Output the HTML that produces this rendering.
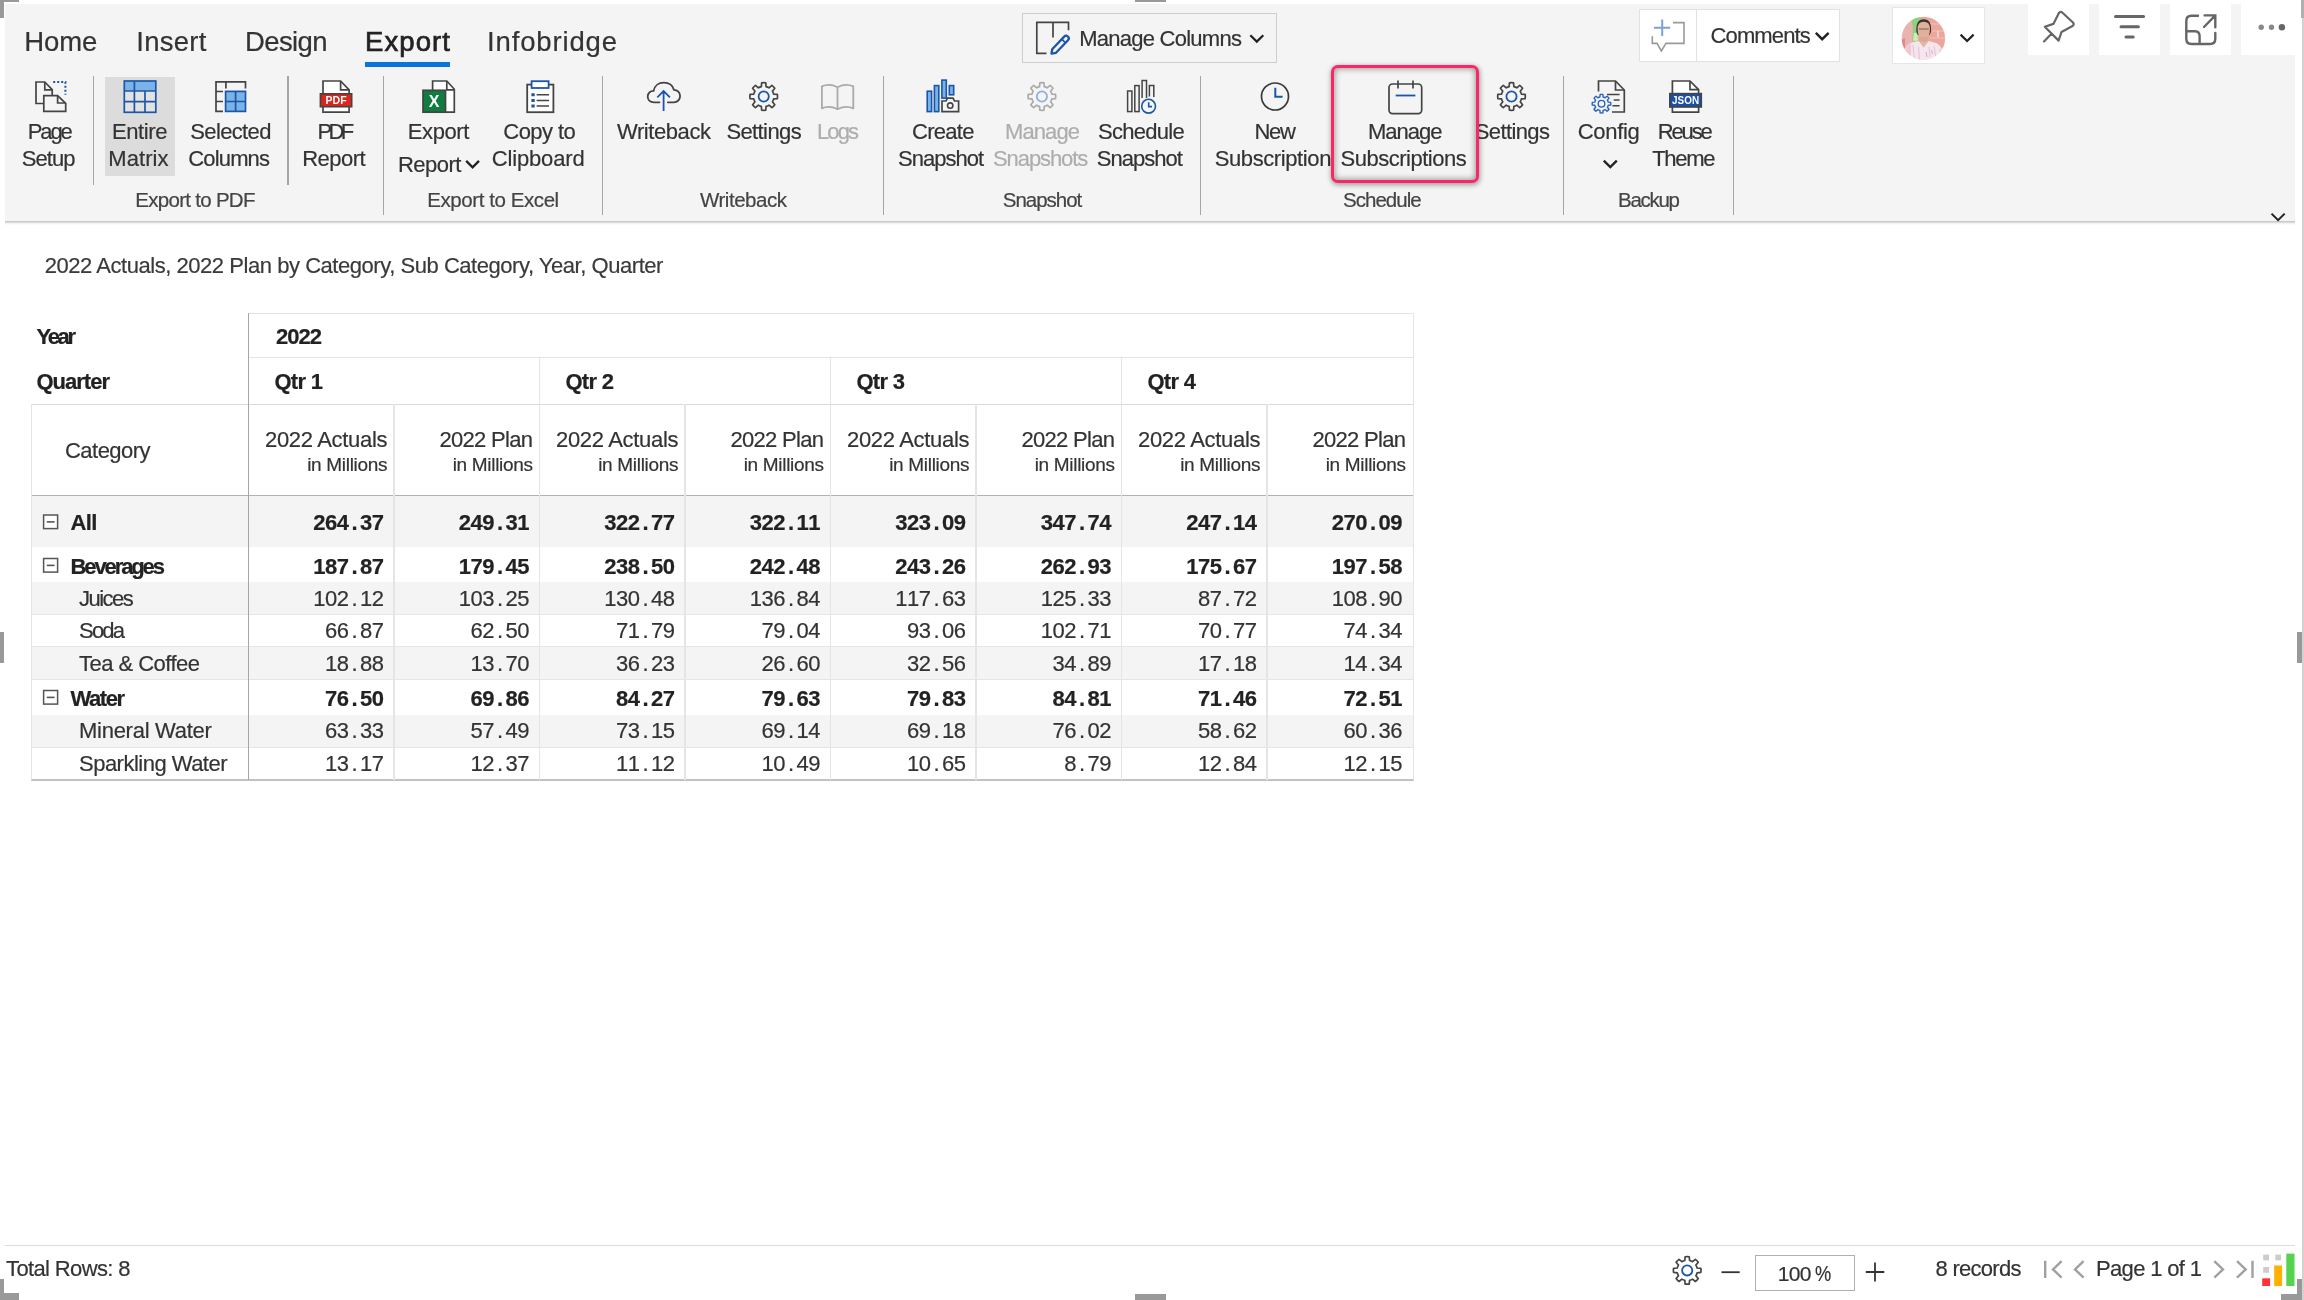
<!DOCTYPE html><html lang="en"><head><meta charset="utf-8"><title>Matrix report</title><style>
html,body{margin:0;padding:0;background:#fff}
body{width:2304px;height:1300px;position:relative;overflow:hidden;font-family:"Liberation Sans",sans-serif}
div,svg{position:absolute}
svg{z-index:5}
.t{position:absolute;white-space:nowrap;line-height:1;font-family:"Liberation Sans", sans-serif;color:#333;z-index:2;-webkit-text-stroke:0.2px}
.ns text{font-family:"Liberation Sans",sans-serif;font-size:22px;fill:#333;stroke:#333;stroke-width:0.2px}
.ns text.b{font-weight:700;fill:#222;stroke:#222}
.h{background:#999}
.sep{background:#a6a6a6;width:1.5px}
.wb{background:#fff}
</style></head><body><div id="page" style="left:0;top:0;width:2304px;height:1300px;will-change:transform">
<div style="left:2302px;top:0;width:2px;height:1300px;background:#d2d2d2"></div>
<div style="left:5px;top:4px;width:2290px;height:216.5px;background:#f4f4f4"></div>
<div style="left:5px;top:220.5px;width:2290px;height:4px;background:linear-gradient(rgba(0,0,0,.26),rgba(0,0,0,.06) 60%,rgba(0,0,0,0))"></div>
<div style="left:105.2px;top:76.6px;width:69.4px;height:99.4px;background:#dcdcdc"></div>
<div class="sep" style="left:92.6px;top:76.4px;height:109px"></div>
<div class="sep" style="left:287.3px;top:76.4px;height:109px"></div>
<div class="sep" style="left:382.6px;top:76.4px;height:138.6px"></div>
<div class="sep" style="left:601.6999999999999px;top:76.4px;height:138.6px"></div>
<div class="sep" style="left:882.9px;top:76.4px;height:138.6px"></div>
<div class="sep" style="left:1199.6px;top:76.4px;height:138.6px"></div>
<div class="sep" style="left:1562.6px;top:76.4px;height:138.6px"></div>
<div class="sep" style="left:1732.6px;top:76.4px;height:138.6px"></div>
<div style="left:364.8px;top:61.6px;width:85.4px;height:5.6px;background:#0a74d8"></div>
<div style="left:1022.4px;top:12.8px;width:255px;height:50.5px;box-sizing:border-box;border:1.5px solid #cdcdcd"></div>
<div class="wb" style="left:1639.3px;top:9.2px;width:201.2px;height:52.8px;box-sizing:border-box;border:1.5px solid #e2e2e2"></div>
<div style="left:1695.5px;top:10px;width:1.5px;height:51px;background:#e2e2e2"></div>
<div class="wb" style="left:1891.5px;top:6.6px;width:93.2px;height:57.8px;box-sizing:border-box;border:1.5px solid #e6e6e6"></div>
<div class="wb" style="left:2028px;top:4px;width:61.2px;height:51.2px"></div>
<div class="wb" style="left:2099px;top:4px;width:61.0px;height:51.2px"></div>
<div class="wb" style="left:2169.5px;top:4px;width:61.5px;height:51.2px"></div>
<div class="wb" style="left:2241px;top:4px;width:54.0px;height:51.2px"></div>
<span class="t" style="left:24.20px;top:28.00px;font-size:27.5px;letter-spacing:-0.086px;">Home</span>
<span class="t" style="left:136.30px;top:28.00px;font-size:27.5px;letter-spacing:0.244px;">Insert</span>
<span class="t" style="left:245.00px;top:28.00px;font-size:27.5px;letter-spacing:-0.622px;">Design</span>
<span class="t" style="left:365.00px;top:28.00px;font-size:27.5px;color:#222;letter-spacing:1.103px;-webkit-text-stroke:0.7px #222;">Export</span>
<span class="t" style="left:487.00px;top:28.00px;font-size:27.5px;letter-spacing:0.852px;">Infobridge</span>
<span class="t" style="left:27.80px;top:121.00px;font-size:22px;letter-spacing:-2.130px;">Page</span>
<span class="t" style="left:21.70px;top:148.00px;font-size:22px;letter-spacing:-0.900px;">Setup</span>
<span class="t" style="left:112.00px;top:121.00px;font-size:22px;letter-spacing:-0.397px;">Entire</span>
<span class="t" style="left:108.30px;top:148.00px;font-size:22px;letter-spacing:0.082px;">Matrix</span>
<span class="t" style="left:190.30px;top:121.00px;font-size:22px;letter-spacing:-0.646px;">Selected</span>
<span class="t" style="left:188.30px;top:148.00px;font-size:22px;letter-spacing:-0.852px;">Columns</span>
<span class="t" style="left:317.50px;top:121.00px;font-size:22px;letter-spacing:-3.650px;">PDF</span>
<span class="t" style="left:302.20px;top:148.00px;font-size:22px;letter-spacing:-0.529px;">Report</span>
<span class="t" style="left:407.80px;top:121.00px;font-size:22px;letter-spacing:-0.399px;">Export</span>
<span class="t" style="left:398.00px;top:154.00px;font-size:22px;letter-spacing:-0.529px;">Report</span>
<span class="t" style="left:503.30px;top:121.00px;font-size:22px;letter-spacing:-0.555px;">Copy to</span>
<span class="t" style="left:491.70px;top:148.00px;font-size:22px;letter-spacing:-0.146px;">Clipboard</span>
<span class="t" style="left:617.00px;top:121.00px;font-size:22px;letter-spacing:-0.426px;">Writeback</span>
<span class="t" style="left:726.40px;top:121.00px;font-size:22px;letter-spacing:-0.600px;">Settings</span>
<span class="t" style="left:817.00px;top:121.00px;font-size:22px;color:#adadad;letter-spacing:-1.906px;">Logs</span>
<span class="t" style="left:912.00px;top:121.00px;font-size:22px;letter-spacing:-0.729px;">Create</span>
<span class="t" style="left:898.00px;top:148.00px;font-size:22px;letter-spacing:-0.967px;">Snapshot</span>
<span class="t" style="left:1005.00px;top:121.00px;font-size:22px;color:#adadad;letter-spacing:-0.903px;">Manage</span>
<span class="t" style="left:993.00px;top:148.00px;font-size:22px;color:#adadad;letter-spacing:-1.084px;">Snapshots</span>
<span class="t" style="left:1098.00px;top:121.00px;font-size:22px;letter-spacing:-0.721px;">Schedule</span>
<span class="t" style="left:1096.70px;top:148.00px;font-size:22px;letter-spacing:-0.981px;">Snapshot</span>
<span class="t" style="left:1254.40px;top:121.00px;font-size:22px;letter-spacing:-1.208px;">New</span>
<span class="t" style="left:1214.70px;top:148.00px;font-size:22px;letter-spacing:-0.398px;">Subscription</span>
<span class="t" style="left:1474.70px;top:121.00px;font-size:22px;letter-spacing:-0.600px;">Settings</span>
<span class="t" style="left:1368.00px;top:121.00px;font-size:22px;letter-spacing:-1.003px;z-index:4;">Manage</span>
<span class="t" style="left:1340.60px;top:148.00px;font-size:22px;letter-spacing:-0.498px;z-index:4;">Subscriptions</span>
<span class="t" style="left:1577.80px;top:121.00px;font-size:22px;letter-spacing:-0.339px;">Config</span>
<span class="t" style="left:1657.80px;top:121.00px;font-size:22px;letter-spacing:-2.148px;">Reuse</span>
<span class="t" style="left:1652.20px;top:148.00px;font-size:22px;letter-spacing:-1.271px;">Theme</span>
<span class="t" style="left:135.30px;top:190.00px;font-size:20.5px;color:#444;letter-spacing:-0.713px;">Export to PDF</span>
<span class="t" style="left:427.20px;top:190.00px;font-size:20.5px;color:#444;letter-spacing:-0.420px;">Export to Excel</span>
<span class="t" style="left:700.00px;top:190.00px;font-size:20.5px;color:#444;letter-spacing:-0.471px;">Writeback</span>
<span class="t" style="left:1002.80px;top:190.00px;font-size:20.5px;color:#444;letter-spacing:-1.032px;">Snapshot</span>
<span class="t" style="left:1343.00px;top:190.00px;font-size:20.5px;color:#444;letter-spacing:-0.969px;">Schedule</span>
<span class="t" style="left:1618.00px;top:190.00px;font-size:20.5px;color:#444;letter-spacing:-1.278px;">Backup</span>
<span class="t" style="left:1079.30px;top:28.00px;font-size:22px;letter-spacing:-0.757px;">Manage Columns</span>
<span class="t" style="left:1710.50px;top:25.00px;font-size:22px;letter-spacing:-0.866px;">Comments</span>
<span class="t" style="left:44.70px;top:255.00px;font-size:22px;color:#3a3a3a;letter-spacing:-0.455px;">2022 Actuals, 2022 Plan by Category, Sub Category, Year, Quarter</span>
<span class="t" style="left:36.50px;top:326.00px;font-size:22px;font-weight:700;color:#222;letter-spacing:-2.333px;">Year</span>
<span class="t" style="left:36.50px;top:371.00px;font-size:22px;font-weight:700;color:#222;letter-spacing:-0.997px;">Quarter</span>
<span class="t" style="left:276.00px;top:326.00px;font-size:22px;font-weight:700;color:#222;letter-spacing:-0.984px;">2022</span>
<span class="t" style="left:274.40px;top:371.00px;font-size:22px;font-weight:700;color:#222;letter-spacing:-0.690px;">Qtr 1</span>
<span class="t" style="left:565.40px;top:371.00px;font-size:22px;font-weight:700;color:#222;letter-spacing:-0.690px;">Qtr 2</span>
<span class="t" style="left:856.40px;top:371.00px;font-size:22px;font-weight:700;color:#222;letter-spacing:-0.690px;">Qtr 3</span>
<span class="t" style="left:1147.40px;top:371.00px;font-size:22px;font-weight:700;color:#222;letter-spacing:-0.690px;">Qtr 4</span>
<span class="t" style="left:65.00px;top:440.00px;font-size:22px;letter-spacing:-0.526px;">Category</span>
<span class="t" style="left:265.00px;top:429.00px;font-size:22px;letter-spacing:-0.317px;">2022 Actuals</span>
<span class="t" style="left:307.20px;top:455.00px;font-size:19px;letter-spacing:-0.312px;">in Millions</span>
<span class="t" style="left:439.50px;top:429.00px;font-size:22px;letter-spacing:-0.699px;">2022 Plan</span>
<span class="t" style="left:452.70px;top:455.00px;font-size:19px;letter-spacing:-0.312px;">in Millions</span>
<span class="t" style="left:556.00px;top:429.00px;font-size:22px;letter-spacing:-0.317px;">2022 Actuals</span>
<span class="t" style="left:598.20px;top:455.00px;font-size:19px;letter-spacing:-0.312px;">in Millions</span>
<span class="t" style="left:730.50px;top:429.00px;font-size:22px;letter-spacing:-0.699px;">2022 Plan</span>
<span class="t" style="left:743.70px;top:455.00px;font-size:19px;letter-spacing:-0.312px;">in Millions</span>
<span class="t" style="left:847.00px;top:429.00px;font-size:22px;letter-spacing:-0.317px;">2022 Actuals</span>
<span class="t" style="left:889.20px;top:455.00px;font-size:19px;letter-spacing:-0.312px;">in Millions</span>
<span class="t" style="left:1021.50px;top:429.00px;font-size:22px;letter-spacing:-0.699px;">2022 Plan</span>
<span class="t" style="left:1034.70px;top:455.00px;font-size:19px;letter-spacing:-0.312px;">in Millions</span>
<span class="t" style="left:1138.00px;top:429.00px;font-size:22px;letter-spacing:-0.317px;">2022 Actuals</span>
<span class="t" style="left:1180.20px;top:455.00px;font-size:19px;letter-spacing:-0.312px;">in Millions</span>
<span class="t" style="left:1312.50px;top:429.00px;font-size:22px;letter-spacing:-0.699px;">2022 Plan</span>
<span class="t" style="left:1325.70px;top:455.00px;font-size:19px;letter-spacing:-0.312px;">in Millions</span>
<span class="t" style="left:70.60px;top:512.00px;font-size:22px;font-weight:700;color:#222;letter-spacing:-0.662px;">All</span>
<span class="t" style="left:70.60px;top:556.00px;font-size:22px;font-weight:700;color:#222;letter-spacing:-2.114px;">Beverages</span>
<span class="t" style="left:79.00px;top:588.00px;font-size:22px;letter-spacing:-1.522px;">Juices</span>
<span class="t" style="left:79.00px;top:620.00px;font-size:22px;letter-spacing:-1.797px;">Soda</span>
<span class="t" style="left:79.00px;top:653.00px;font-size:22px;letter-spacing:-0.527px;">Tea &amp; Coffee</span>
<span class="t" style="left:70.60px;top:688.00px;font-size:22px;font-weight:700;color:#222;letter-spacing:-1.478px;">Water</span>
<span class="t" style="left:79.00px;top:720.00px;font-size:22px;letter-spacing:-0.267px;">Mineral Water</span>
<span class="t" style="left:79.00px;top:753.00px;font-size:22px;letter-spacing:-0.513px;">Sparkling Water</span>
<span class="t" style="left:6.00px;top:1258.00px;font-size:22px;letter-spacing:-0.622px;">Total Rows: 8</span>
<span class="t" style="left:1777.80px;top:1263.00px;font-size:21px;letter-spacing:-0.723px;">100</span>
<span class="t" style="left:1815.40px;top:1263.00px;font-size:22px;transform:scaleX(.83);transform-origin:0 0;">%</span>
<span class="t" style="left:1935.60px;top:1258.00px;font-size:22px;letter-spacing:-0.740px;">8 records</span>
<span class="t" style="left:2096.00px;top:1258.00px;font-size:22px;letter-spacing:-0.655px;">Page 1 of 1</span>
<div style="left:1331px;top:65.2px;width:148px;height:118.2px;box-sizing:border-box;border:3.8px solid #fb2666;border-radius:7px;background:#f4f4f4;z-index:3;box-shadow:0.5px 1.5px 5px rgba(0,0,0,.36),inset 0 0 6px 0.5px rgba(0,0,0,.42)"></div>
<svg width="2304" height="232" viewBox="0 0 2304 232" style="left:0;top:0">
<g fill="none" stroke="#444" stroke-width="1.7" stroke-linejoin="miter"><path d="M44 103.5H36V82H44.8L52.2 89.6V95.5"/><path d="M44.8 82V89.8H52.2"/><path d="M43.8 95.7H57.6L65.7 103.4V111.3H43.8Z" fill="#f4f4f4"/><path d="M57.6 95.7V103H65.7"/></g>
<path d="M53.2 81.9H65.4V94.8" fill="none" stroke="#1c57a7" stroke-width="2" stroke-dasharray="2 2"/>
<rect x="124.3" y="81" width="31.5" height="31.3" fill="#e2e2e2"/><rect x="124.3" y="81" width="31.5" height="10" fill="#79b3ea"/><g fill="none" stroke="#1c57a7" stroke-width="1.7"><rect x="124.3" y="81" width="31.5" height="31.3"/><path d="M124.3 91H155.8M124.3 101.7H155.8M134.4 81V112.3M145 91V112.3"/></g>
<path d="M223 111.4H216V81.8H245.5V88.6M225.9 81.8V88.6M216 91.5H223M216 101.5H223" fill="none" stroke="#444" stroke-width="1.7"/><rect x="225.6" y="91.4" width="19.9" height="20" fill="#79b3ea" stroke="#1c57a7" stroke-width="1.7"/><path d="M235.6 91.4V111.4M225.6 101.5H245.5" stroke="#1c57a7" stroke-width="1.7"/>
<path d="M323 81H340.6L349.1 89.8V112.2H323Z" fill="#fff" stroke="#444" stroke-width="1.7"/><path d="M340.6 81V89.8H349.1" fill="none" stroke="#444" stroke-width="1.7"/><rect x="320.4" y="93.8" width="31.3" height="12.9" fill="#d9251c" stroke="#444" stroke-width="1.6"/><text x="336.1" y="104.3" font-family="Liberation Sans, sans-serif" font-weight="700" font-size="10.5" fill="#fff" text-anchor="middle">PDF</text>
<path d="M432.6 81H446.8L454.3 89.3V112.2H432.6Z" fill="#fff" stroke="#444" stroke-width="1.7"/><path d="M446.8 81V89.8H454.3" fill="none" stroke="#444" stroke-width="1.7"/><rect x="423" y="90.3" width="22.5" height="21.9" fill="#107c41" stroke="#444" stroke-width="1.7"/><text x="434.2" y="107" font-family="Liberation Sans, sans-serif" font-weight="700" font-size="16" fill="#fff" text-anchor="middle">X</text>
<rect x="527.2" y="84.6" width="26.2" height="27.6" fill="#fff" stroke="#444" stroke-width="1.8"/><rect x="531.6" y="81.2" width="17" height="6.8" fill="#fff" stroke="#1c57a7" stroke-width="1.8"/><path d="M536.6 94.8H549M536.6 100.4H549M536.6 105.9H549" stroke="#444" stroke-width="1.5"/><path d="M531.4 93.3h3.3v3h-3.3zM531.4 98.9h3.3v3h-3.3zM531.4 104.4h3.3v3h-3.3z" fill="#1c57a7"/>
<path d="M659.5 102.3H653.8C650 102.3 647.7 99.6 647.7 96.6C647.7 93.4 650.2 90.8 653.6 90.9C654.5 86 658.5 82.7 663.8 82.7C669 82.7 672.7 85.6 673.9 89.8C677.5 89.8 680.1 92.6 680.1 96C680.1 99.6 677.4 102.3 673.8 102.3H667.8" fill="none" stroke="#444" stroke-width="1.8" stroke-linecap="round"/><path d="M663.6 111V91.3M657.3 97.4L663.6 91.1L669.9 97.4" fill="none" stroke="#1c57a7" stroke-width="1.8"/>
<path d="M761.32 86.58L761.66 82.85A13.80 13.80 0 0 1 765.74 82.85L766.08 86.58A10.20 10.20 0 0 1 769.03 87.80L771.91 85.41A13.80 13.80 0 0 1 774.79 88.29L772.40 91.17A10.20 10.20 0 0 1 773.62 94.12L777.35 94.46A13.80 13.80 0 0 1 777.35 98.54L773.62 98.88A10.20 10.20 0 0 1 772.40 101.83L774.79 104.71A13.80 13.80 0 0 1 771.91 107.59L769.03 105.20A10.20 10.20 0 0 1 766.08 106.42L765.74 110.15A13.80 13.80 0 0 1 761.66 110.15L761.32 106.42A10.20 10.20 0 0 1 758.37 105.20L755.49 107.59A13.80 13.80 0 0 1 752.61 104.71L755.00 101.83A10.20 10.20 0 0 1 753.78 98.88L750.05 98.54A13.80 13.80 0 0 1 750.05 94.46L753.78 94.12A10.20 10.20 0 0 1 755.00 91.17L752.61 88.29A13.80 13.80 0 0 1 755.49 85.41L758.37 87.80A10.20 10.20 0 0 1 761.32 86.58Z" fill="none" stroke="#444" stroke-width="1.7" stroke-linejoin="round"/><circle cx="763.7" cy="96.5" r="5.1" fill="none" stroke="#1c57a7" stroke-width="1.8"/>
<path d="M837.5 87.2Q829.5 83 821.9 86.3V108.3Q829.5 105 837.5 109.2Q845.5 105 853.3 108.3V86.3Q845.5 83 837.5 87.2V109.2" fill="none" stroke="#aaa" stroke-width="1.8" stroke-linejoin="round"/>
<g fill="#79b3ea" stroke="#1c57a7" stroke-width="1.6"><rect x="927.2" y="91.2" width="4.4" height="20.4"/><rect x="934.4" y="85.6" width="4.4" height="26"/><rect x="941.9" y="80.1" width="4.4" height="18"/><rect x="949.3" y="85.6" width="4.4" height="9.2"/></g><path d="M942 111.6V101H946L947.5 98.2H953L954.5 101H958.6V111.6Z" fill="#f4f4f4" stroke="#444" stroke-width="1.7"/><circle cx="950.2" cy="105.6" r="2.7" fill="none" stroke="#444" stroke-width="1.6"/>
<path d="M1039.52 86.58L1039.86 82.85A13.80 13.80 0 0 1 1043.94 82.85L1044.28 86.58A10.20 10.20 0 0 1 1047.23 87.80L1050.11 85.41A13.80 13.80 0 0 1 1052.99 88.29L1050.60 91.17A10.20 10.20 0 0 1 1051.82 94.12L1055.55 94.46A13.80 13.80 0 0 1 1055.55 98.54L1051.82 98.88A10.20 10.20 0 0 1 1050.60 101.83L1052.99 104.71A13.80 13.80 0 0 1 1050.11 107.59L1047.23 105.20A10.20 10.20 0 0 1 1044.28 106.42L1043.94 110.15A13.80 13.80 0 0 1 1039.86 110.15L1039.52 106.42A10.20 10.20 0 0 1 1036.57 105.20L1033.69 107.59A13.80 13.80 0 0 1 1030.81 104.71L1033.20 101.83A10.20 10.20 0 0 1 1031.98 98.88L1028.25 98.54A13.80 13.80 0 0 1 1028.25 94.46L1031.98 94.12A10.20 10.20 0 0 1 1033.20 91.17L1030.81 88.29A13.80 13.80 0 0 1 1033.69 85.41L1036.57 87.80A10.20 10.20 0 0 1 1039.52 86.58Z" fill="none" stroke="#aaa" stroke-width="1.7" stroke-linejoin="round"/><circle cx="1041.9" cy="96.5" r="5.1" fill="none" stroke="#8fb0e0" stroke-width="1.8"/>
<g fill="none" stroke="#444" stroke-width="1.5"><rect x="1127.6" y="91" width="4.3" height="20.6"/><rect x="1134.8" y="85.6" width="4.3" height="26"/><path d="M1142.1 98V80.4H1146.5V98M1149.4 96.5V85.6H1153.8V97"/></g><circle cx="1148.6" cy="106.2" r="6.9" fill="#f4f4f4" stroke="#1c57a7" stroke-width="1.6"/><path d="M1148.7 102.2V106.6H1152" fill="none" stroke="#1c57a7" stroke-width="1.6"/>
<circle cx="1275" cy="96.5" r="13.5" fill="none" stroke="#3a3a3a" stroke-width="1.7"/><path d="M1275.3 87.8V96.8H1282.6" fill="none" stroke="#1c57a7" stroke-width="2"/>
<path d="M1509.12 86.58L1509.46 82.85A13.80 13.80 0 0 1 1513.54 82.85L1513.88 86.58A10.20 10.20 0 0 1 1516.83 87.80L1519.71 85.41A13.80 13.80 0 0 1 1522.59 88.29L1520.20 91.17A10.20 10.20 0 0 1 1521.42 94.12L1525.15 94.46A13.80 13.80 0 0 1 1525.15 98.54L1521.42 98.88A10.20 10.20 0 0 1 1520.20 101.83L1522.59 104.71A13.80 13.80 0 0 1 1519.71 107.59L1516.83 105.20A10.20 10.20 0 0 1 1513.88 106.42L1513.54 110.15A13.80 13.80 0 0 1 1509.46 110.15L1509.12 106.42A10.20 10.20 0 0 1 1506.17 105.20L1503.29 107.59A13.80 13.80 0 0 1 1500.41 104.71L1502.80 101.83A10.20 10.20 0 0 1 1501.58 98.88L1497.85 98.54A13.80 13.80 0 0 1 1497.85 94.46L1501.58 94.12A10.20 10.20 0 0 1 1502.80 91.17L1500.41 88.29A13.80 13.80 0 0 1 1503.29 85.41L1506.17 87.80A10.20 10.20 0 0 1 1509.12 86.58Z" fill="none" stroke="#444" stroke-width="1.7" stroke-linejoin="round"/><circle cx="1511.5" cy="96.5" r="5.1" fill="none" stroke="#1c57a7" stroke-width="1.8"/>
<path d="M1598.5 91.5V81H1615.5L1624.3 90V112H1612" fill="none" stroke="#444" stroke-width="1.7"/><path d="M1615.5 81V90H1624.3" fill="none" stroke="#444" stroke-width="1.7"/><path d="M1607 94.5H1619.6M1613.7 100.1H1619.6M1612.5 105.7H1619.6" stroke="#444" stroke-width="1.5"/>
<path d="M1599.89 96.99L1600.13 94.50A9.30 9.30 0 0 1 1602.87 94.50L1603.11 96.99A6.90 6.90 0 0 1 1605.11 97.82L1607.03 96.22A9.30 9.30 0 0 1 1608.98 98.17L1607.38 100.09A6.90 6.90 0 0 1 1608.21 102.09L1610.70 102.33A9.30 9.30 0 0 1 1610.70 105.07L1608.21 105.31A6.90 6.90 0 0 1 1607.38 107.31L1608.98 109.23A9.30 9.30 0 0 1 1607.03 111.18L1605.11 109.58A6.90 6.90 0 0 1 1603.11 110.41L1602.87 112.90A9.30 9.30 0 0 1 1600.13 112.90L1599.89 110.41A6.90 6.90 0 0 1 1597.89 109.58L1595.97 111.18A9.30 9.30 0 0 1 1594.02 109.23L1595.62 107.31A6.90 6.90 0 0 1 1594.79 105.31L1592.30 105.07A9.30 9.30 0 0 1 1592.30 102.33L1594.79 102.09A6.90 6.90 0 0 1 1595.62 100.09L1594.02 98.17A9.30 9.30 0 0 1 1595.97 96.22L1597.89 97.82A6.90 6.90 0 0 1 1599.89 96.99Z" fill="none" stroke="#2a62b8" stroke-width="1.4" stroke-linejoin="round"/><circle cx="1601.5" cy="103.7" r="3.3" fill="none" stroke="#2a62b8" stroke-width="1.4"/>
<path d="M1672.4 81H1690L1698.6 89.6V112.2H1672.4Z" fill="#fff" stroke="#444" stroke-width="1.7"/><path d="M1690 81V89.6H1698.6" fill="none" stroke="#444" stroke-width="1.7"/><rect x="1669.8" y="93.6" width="31.5" height="13.4" fill="#1a4fa3" stroke="#444" stroke-width="1.6"/><text x="1685.6" y="104.2" font-family="Liberation Sans, sans-serif" font-weight="700" font-size="10" fill="#fff" text-anchor="middle" textLength="27" lengthAdjust="spacingAndGlyphs">JSON</text>
<rect x="1389" y="84" width="32.7" height="29.6" rx="3.5" fill="none" stroke="#444" stroke-width="1.7"/><path d="M1398 80.4V88.6M1413 80.4V88.6" stroke="#444" stroke-width="1.7"/><path d="M1395.7 95.5H1415.4" stroke="#1c57a7" stroke-width="1.8"/>
<path d="M1046.5 53.3H1036.8V22.3H1068.5V30.2M1053 22.3V37.6" fill="none" stroke="#444" stroke-width="1.7"/>
<path d="M1051.5 53.6L1052.2 49.2L1064.2 36.6A2.6 2.6 0 0 1 1068 40.2L1056 52.8Z" fill="#f4f4f4" stroke="#1c57a7" stroke-width="2.3" stroke-linejoin="round"/><path d="M1061.8 39.2L1065.5 42.8" stroke="#1c57a7" stroke-width="1.8"/>
<path d="M1250.3 35.2L1256.8 41.6L1263.3 35.2" fill="none" stroke="#222" stroke-width="2.2"/>
<path d="M1673 22.6H1684V43.4H1666L1661.3 51L1657 43.4H1652.3V36.3" fill="none" stroke="#999" stroke-width="1.6"/>
<path d="M1653.9 27.7H1670.2M1662.2 19.6V35.9" stroke="#7ba2d8" stroke-width="2"/>
<path d="M1815.8 32.8L1822.1999999999998 39.2L1828.6 32.8" fill="none" stroke="#222" stroke-width="2.4"/>
<path d="M1960.6 34.6L1967.1 41L1973.6 34.6" fill="none" stroke="#222" stroke-width="2.2"/>
<path d="M2044.8 26.7L2053.4 23.9L2058.9 13Q2060.5 11 2062.5 12.8L2073 22.5Q2074.5 24.5 2072.5 26L2061.5 32L2058.6 40.6ZM2051.5 33.8L2044 41.5" fill="none" stroke="#666" stroke-width="2.2" stroke-linejoin="round" stroke-linecap="round"/>
<path d="M2115.5 16.4H2143.6M2121 26.7H2138.4M2126 37H2133.2" stroke="#666" stroke-width="3" stroke-linecap="round"/>
<path d="M2198 15.8H2191.5Q2186.3 15.8 2186.3 21V38.7Q2186.3 44 2191.5 44H2210Q2215.3 44 2215.3 38.7V33M2186.3 31.2H2195Q2199.6 31.2 2199.6 36V44M2204 27L2214.6 16.2M2204.6 15.4H2215.3V27.2" fill="none" stroke="#666" stroke-width="2.4" stroke-linecap="round"/>
<circle cx="2261.2" cy="27.2" r="2.7" fill="#888"/><circle cx="2271.5" cy="27.2" r="2.7" fill="#888"/><circle cx="2281.9" cy="27.2" r="3.2" fill="#666"/>
<path d="M2271.5 213.6L2278.1 220.2L2284.7 213.6" fill="none" stroke="#222" stroke-width="2"/>
<defs><clipPath id="av"><circle cx="1923.4" cy="38.4" r="21.7"/></clipPath><filter id="avb" x="-10%" y="-10%" width="120%" height="120%"><feGaussianBlur stdDeviation="0.55"/></filter></defs><g clip-path="url(#av)"><g filter="url(#avb)"><rect x="1898" y="13" width="52" height="52" fill="#eba79b"/><rect x="1898" y="13" width="15" height="52" fill="#e8b3b1"/><path d="M1901 40L1905 38L1905 52L1901 52Z" fill="#d98a8e"/><path d="M1930 24H1946M1932 31H1946M1930 38H1946" stroke="#f3c4b8" stroke-width="1.2"/><path d="M1938 31V37" stroke="#e9d8dc" stroke-width="1.6"/><path d="M1911.5 20Q1916 16.5 1922 17.5L1918 24L1918 40Q1914 43 1912 40Q1914 30 1911.5 20Z" fill="#8ed07e"/><path d="M1914 33Q1918 31 1918 40Q1915 42.5 1913 40Z" fill="#c8efb0"/><path d="M1916.4 32Q1915.6 19.3 1923.7 19.3Q1932 19.3 1931 32L1929.5 35L1918 35Z" fill="#3a3034"/><path d="M1917.6 29Q1917.6 21.8 1923.7 21.8Q1930 21.8 1930 29Q1930 38.8 1923.7 38.8Q1917.6 38.8 1917.6 29Z" fill="#dfb09c"/><path d="M1918.8 29H1928.8" stroke="#6b5555" stroke-width="0.9"/><path d="M1920 37L1927.5 37L1928.5 42L1919 42Z" fill="#d8a995"/><path d="M1902 64Q1902 45.5 1912 42.5L1919 41L1923.6 47.5L1928.5 41L1936 43Q1944 46 1944.5 64Z" fill="#f5e6ee"/><path d="M1919 41L1923.6 47.5L1928.5 41Q1924 43 1919 41Z" fill="#e2b9a8"/><path d="M1906 47Q1908 44 1911 43.5L1911 62L1904 62Z" fill="#f0c9cf"/><path d="M1913 45L1914.5 60M1918.5 47L1919.5 60M1929 47L1930 57M1934 46L1936 58M1940 49L1940.5 56" stroke="#ecc2d6" stroke-width="1.2"/><path d="M1931.5 50L1932.5 54M1926 52L1927 57" stroke="#c4afd0" stroke-width="1"/></g></g>
<path d="M466.2 160.9L472.6 167.4L479 160.9" fill="none" stroke="#222" stroke-width="2.3"/>
<path d="M1603.8 160.6L1610.3 167.1L1616.8 160.6" fill="none" stroke="#222" stroke-width="2.3"/>
</svg>
<div style="left:31px;top:495.6px;width:1381.8px;height:51.2px;background:#f4f4f4"></div>
<div style="left:31px;top:581.8px;width:1381.8px;height:32.6px;background:#f4f4f4"></div>
<div style="left:31px;top:646.8px;width:1381.8px;height:32.6px;background:#f4f4f4"></div>
<div style="left:31px;top:715px;width:1381.8px;height:32.4px;background:#f4f4f4"></div>
<div style="left:31px;top:613.8px;width:1381.8px;height:1.3px;background:#e5e5e5"></div>
<div style="left:31px;top:646.2px;width:1381.8px;height:1.3px;background:#e5e5e5"></div>
<div style="left:31px;top:678.8px;width:1381.8px;height:1.3px;background:#e5e5e5"></div>
<div style="left:31px;top:746.8px;width:1381.8px;height:1.3px;background:#e5e5e5"></div>
<div style="left:248px;top:313px;width:1165.6px;height:1.4px;background:#e5e5e5"></div>
<div style="left:248px;top:356.9px;width:1165.6px;height:1.4px;background:#e5e5e5"></div>
<div style="left:31px;top:403.8px;width:1382.6px;height:1.5px;background:#dadada"></div>
<div style="left:31px;top:494.9px;width:1382.6px;height:1.5px;background:#b2b2b2"></div>
<div style="left:31px;top:778.5px;width:1382.6px;height:2px;background:#c2c2c2"></div>
<div style="left:30.7px;top:404px;width:1.4px;height:376px;background:#e5e5e5"></div>
<div style="left:1412.5px;top:313px;width:1.4px;height:467px;background:#e5e5e5"></div>
<div style="left:393.3px;top:404px;width:1.3px;height:375.5px;background:#e5e5e5"></div>
<div style="left:538.8px;top:357px;width:1.3px;height:422.5px;background:#e5e5e5"></div>
<div style="left:684.3px;top:404px;width:1.3px;height:375.5px;background:#e5e5e5"></div>
<div style="left:829.8px;top:357px;width:1.3px;height:422.5px;background:#e5e5e5"></div>
<div style="left:975.3px;top:404px;width:1.3px;height:375.5px;background:#e5e5e5"></div>
<div style="left:1120.8px;top:357px;width:1.3px;height:422.5px;background:#e5e5e5"></div>
<div style="left:1266.3px;top:404px;width:1.3px;height:375.5px;background:#e5e5e5"></div>
<div style="left:247.5px;top:313px;width:1.6px;height:466.5px;background:#a6a6a6"></div>
<svg class="ns" width="1420" height="300" viewBox="0 500 1420 300" style="left:0;top:500px">
<text class="b" x="313.23 324.93 336.63 351.39 360.03 371.73" y="530">264.37</text>
<text class="b" x="458.73 470.43 482.13 496.89 505.53 517.23" y="530">249.31</text>
<text class="b" x="604.23 615.93 627.63 642.39 651.03 662.73" y="530">322.77</text>
<text class="b" x="749.73 761.43 773.13 787.89 796.53 808.23" y="530">322.11</text>
<text class="b" x="895.23 906.93 918.63 933.39 942.03 953.73" y="530">323.09</text>
<text class="b" x="1040.73 1052.43 1064.13 1078.89 1087.53 1099.23" y="530">347.74</text>
<text class="b" x="1186.23 1197.93 1209.63 1224.39 1233.03 1244.73" y="530">247.14</text>
<text class="b" x="1331.73 1343.43 1355.13 1369.89 1378.53 1390.23" y="530">270.09</text>
<text class="b" x="313.23 324.93 336.63 351.39 360.03 371.73" y="574">187.87</text>
<text class="b" x="458.73 470.43 482.13 496.89 505.53 517.23" y="574">179.45</text>
<text class="b" x="604.23 615.93 627.63 642.39 651.03 662.73" y="574">238.50</text>
<text class="b" x="749.73 761.43 773.13 787.89 796.53 808.23" y="574">242.48</text>
<text class="b" x="895.23 906.93 918.63 933.39 942.03 953.73" y="574">243.26</text>
<text class="b" x="1040.73 1052.43 1064.13 1078.89 1087.53 1099.23" y="574">262.93</text>
<text class="b" x="1186.23 1197.93 1209.63 1224.39 1233.03 1244.73" y="574">175.67</text>
<text class="b" x="1331.73 1343.43 1355.13 1369.89 1378.53 1390.23" y="574">197.58</text>
<text x="313.23 324.93 336.63 351.39 360.03 371.73" y="606">102.12</text>
<text x="458.73 470.43 482.13 496.89 505.53 517.23" y="606">103.25</text>
<text x="604.23 615.93 627.63 642.39 651.03 662.73" y="606">130.48</text>
<text x="749.73 761.43 773.13 787.89 796.53 808.23" y="606">136.84</text>
<text x="895.23 906.93 918.63 933.39 942.03 953.73" y="606">117.63</text>
<text x="1040.73 1052.43 1064.13 1078.89 1087.53 1099.23" y="606">125.33</text>
<text x="1197.93 1209.63 1224.39 1233.03 1244.73" y="606">87.72</text>
<text x="1331.73 1343.43 1355.13 1369.89 1378.53 1390.23" y="606">108.90</text>
<text x="324.93 336.63 351.39 360.03 371.73" y="638">66.87</text>
<text x="470.43 482.13 496.89 505.53 517.23" y="638">62.50</text>
<text x="615.93 627.63 642.39 651.03 662.73" y="638">71.79</text>
<text x="761.43 773.13 787.89 796.53 808.23" y="638">79.04</text>
<text x="906.93 918.63 933.39 942.03 953.73" y="638">93.06</text>
<text x="1040.73 1052.43 1064.13 1078.89 1087.53 1099.23" y="638">102.71</text>
<text x="1197.93 1209.63 1224.39 1233.03 1244.73" y="638">70.77</text>
<text x="1343.43 1355.13 1369.89 1378.53 1390.23" y="638">74.34</text>
<text x="324.93 336.63 351.39 360.03 371.73" y="671">18.88</text>
<text x="470.43 482.13 496.89 505.53 517.23" y="671">13.70</text>
<text x="615.93 627.63 642.39 651.03 662.73" y="671">36.23</text>
<text x="761.43 773.13 787.89 796.53 808.23" y="671">26.60</text>
<text x="906.93 918.63 933.39 942.03 953.73" y="671">32.56</text>
<text x="1052.43 1064.13 1078.89 1087.53 1099.23" y="671">34.89</text>
<text x="1197.93 1209.63 1224.39 1233.03 1244.73" y="671">17.18</text>
<text x="1343.43 1355.13 1369.89 1378.53 1390.23" y="671">14.34</text>
<text class="b" x="324.93 336.63 351.39 360.03 371.73" y="706">76.50</text>
<text class="b" x="470.43 482.13 496.89 505.53 517.23" y="706">69.86</text>
<text class="b" x="615.93 627.63 642.39 651.03 662.73" y="706">84.27</text>
<text class="b" x="761.43 773.13 787.89 796.53 808.23" y="706">79.63</text>
<text class="b" x="906.93 918.63 933.39 942.03 953.73" y="706">79.83</text>
<text class="b" x="1052.43 1064.13 1078.89 1087.53 1099.23" y="706">84.81</text>
<text class="b" x="1197.93 1209.63 1224.39 1233.03 1244.73" y="706">71.46</text>
<text class="b" x="1343.43 1355.13 1369.89 1378.53 1390.23" y="706">72.51</text>
<text x="324.93 336.63 351.39 360.03 371.73" y="738">63.33</text>
<text x="470.43 482.13 496.89 505.53 517.23" y="738">57.49</text>
<text x="615.93 627.63 642.39 651.03 662.73" y="738">73.15</text>
<text x="761.43 773.13 787.89 796.53 808.23" y="738">69.14</text>
<text x="906.93 918.63 933.39 942.03 953.73" y="738">69.18</text>
<text x="1052.43 1064.13 1078.89 1087.53 1099.23" y="738">76.02</text>
<text x="1197.93 1209.63 1224.39 1233.03 1244.73" y="738">58.62</text>
<text x="1343.43 1355.13 1369.89 1378.53 1390.23" y="738">60.36</text>
<text x="324.93 336.63 351.39 360.03 371.73" y="771">13.17</text>
<text x="470.43 482.13 496.89 505.53 517.23" y="771">12.37</text>
<text x="615.93 627.63 642.39 651.03 662.73" y="771">11.12</text>
<text x="761.43 773.13 787.89 796.53 808.23" y="771">10.49</text>
<text x="906.93 918.63 933.39 942.03 953.73" y="771">10.65</text>
<text x="1064.13 1078.89 1087.53 1099.23" y="771">8.79</text>
<text x="1197.93 1209.63 1224.39 1233.03 1244.73" y="771">12.84</text>
<text x="1343.43 1355.13 1369.89 1378.53 1390.23" y="771">12.15</text>
</svg>
<svg width="80" height="800" viewBox="0 0 80 800" style="left:0;top:0">
<rect x="43.6" y="515" width="14" height="13.6" fill="#fff" stroke="#555" stroke-width="1.5"/><path d="M46.8 521.9H54.6" stroke="#555" stroke-width="1.6"/>
<rect x="43.6" y="558.5" width="14" height="13.6" fill="#fff" stroke="#555" stroke-width="1.5"/><path d="M46.8 565.4H54.6" stroke="#555" stroke-width="1.6"/>
<rect x="43.6" y="690.5" width="14" height="13.6" fill="#fff" stroke="#555" stroke-width="1.5"/><path d="M46.8 697.4H54.6" stroke="#555" stroke-width="1.6"/>
</svg>
<div style="left:5px;top:1244.6px;width:2290px;height:1.6px;background:#dcdcdc"></div>
<div style="left:1755.2px;top:1255px;width:100px;height:35.6px;box-sizing:border-box;border:1.5px solid #b0b0b0;background:#fff"></div>
<svg width="2304" height="60" viewBox="0 1240 2304 60" style="left:0;top:1240px">
<path d="M1684.82 1260.48L1685.16 1256.75A13.80 13.80 0 0 1 1689.24 1256.75L1689.58 1260.48A10.20 10.20 0 0 1 1692.53 1261.70L1695.41 1259.31A13.80 13.80 0 0 1 1698.29 1262.19L1695.90 1265.07A10.20 10.20 0 0 1 1697.12 1268.02L1700.85 1268.36A13.80 13.80 0 0 1 1700.85 1272.44L1697.12 1272.78A10.20 10.20 0 0 1 1695.90 1275.73L1698.29 1278.61A13.80 13.80 0 0 1 1695.41 1281.49L1692.53 1279.10A10.20 10.20 0 0 1 1689.58 1280.32L1689.24 1284.05A13.80 13.80 0 0 1 1685.16 1284.05L1684.82 1280.32A10.20 10.20 0 0 1 1681.87 1279.10L1678.99 1281.49A13.80 13.80 0 0 1 1676.11 1278.61L1678.50 1275.73A10.20 10.20 0 0 1 1677.28 1272.78L1673.55 1272.44A13.80 13.80 0 0 1 1673.55 1268.36L1677.28 1268.02A10.20 10.20 0 0 1 1678.50 1265.07L1676.11 1262.19A13.80 13.80 0 0 1 1678.99 1259.31L1681.87 1261.70A10.20 10.20 0 0 1 1684.82 1260.48Z" fill="none" stroke="#444" stroke-width="1.7" stroke-linejoin="round"/><circle cx="1687.2" cy="1270.4" r="5.1" fill="none" stroke="#1c57a7" stroke-width="1.8"/>
<path d="M1721.5 1272.2H1739.7" stroke="#333" stroke-width="1.8"/>
<path d="M1865.8 1272H1884.3M1875 1262.4V1281.5" stroke="#333" stroke-width="1.8"/>
<path d="M2045.2 1260.7V1278M2061.6 1261.2L2053 1269.4L2061.6 1277.6M2083.6 1261.2L2075 1269.4L2083.6 1277.6M2214.3 1261.2L2223 1269.4L2214.3 1277.6M2237 1261.2L2245.7 1269.4L2237 1277.6M2252.5 1260.7V1278" fill="none" stroke="#a0a0a0" stroke-width="2.4"/>
<rect x="2262.2" y="1278.3" width="7.9" height="7.7" fill="#ff3333"/><rect x="2274.2" y="1265.5" width="7.9" height="20.5" fill="#ffb000"/><rect x="2286.3" y="1253.6" width="8.2" height="32.4" fill="#55d34e"/><rect x="2263.2" y="1254.6" width="5.8" height="5.8" fill="#ccc"/><rect x="2275.3" y="1254.6" width="5.8" height="5.8" fill="#ccc"/><rect x="2263.2" y="1267" width="5.8" height="5.8" fill="#ccc"/>
</svg>
<div class="h" style="left:0;top:0;width:19px;height:1.8px"></div><div class="h" style="left:0;top:0;width:4px;height:17.6px"></div>
<div class="h" style="left:1135px;top:0;width:31px;height:1.8px"></div>
<div class="h" style="left:2301.4px;top:0;width:2.6px;height:17.6px;background:#b0b0b0"></div>
<div class="h" style="left:0;top:632px;width:4px;height:30.6px"></div>
<div class="h" style="left:2296.8px;top:632px;width:5.2px;height:30.6px"></div>
<div class="h" style="left:0;top:1293.4px;width:19.3px;height:7px"></div><div class="h" style="left:0;top:1278.6px;width:4px;height:22px"></div>
<div class="h" style="left:1135px;top:1293.7px;width:31px;height:7px"></div>
<div class="h" style="left:2280.8px;top:1294px;width:21.2px;height:7px"></div><div class="h" style="left:2297px;top:1278.7px;width:5px;height:22px"></div>
</div></body></html>
